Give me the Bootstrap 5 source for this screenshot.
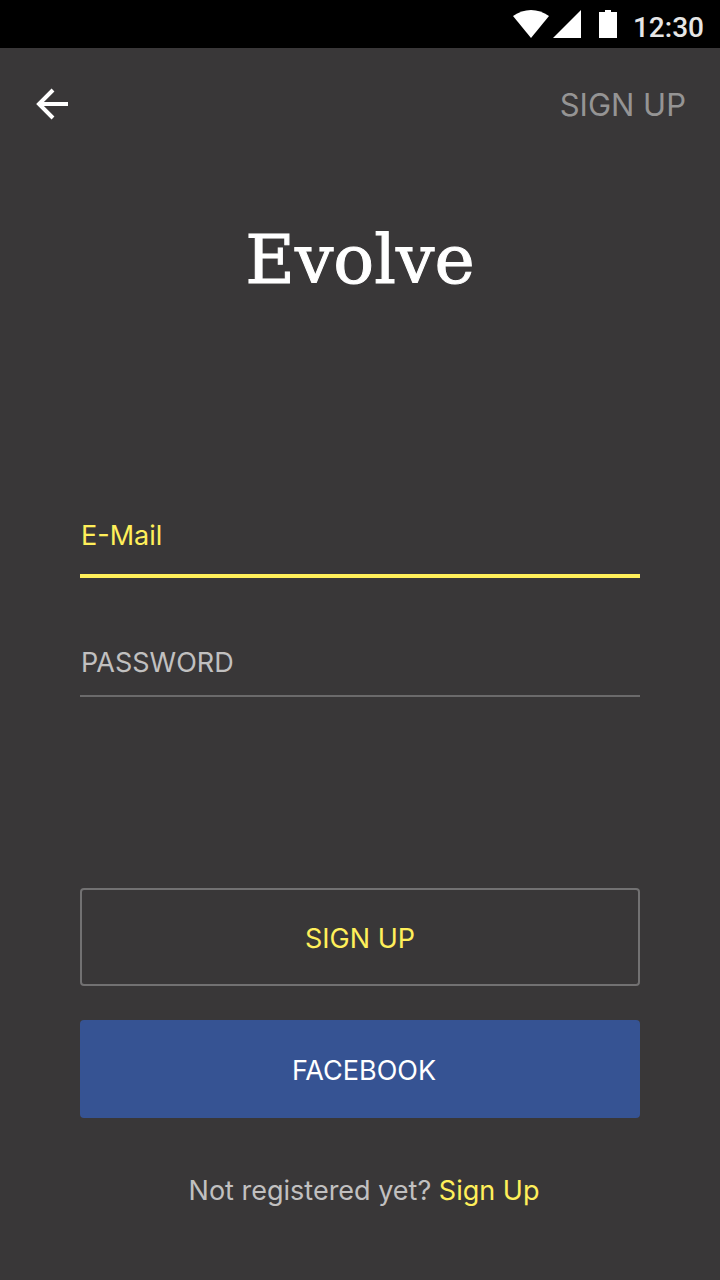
<!DOCTYPE html>
<html lang="en">
<head>
<meta charset="utf-8">
<meta name="viewport" content="width=device-width, initial-scale=1">
<title>Evolve</title>
<link href="https://cdn.jsdelivr.net/npm/bootstrap@5.3.0/dist/css/bootstrap.min.css" rel="stylesheet">
<style>
body{background:#393738;color:#c1c0c0;font-family:Inter,"Liberation Sans",sans-serif;font-size:27px;font-weight:400;line-height:40px}
.statusbar{background:#000;height:48px;color:#fff}
.clock{font-family:Roboto,sans-serif;font-size:28px;font-weight:500;color:#e6e6e6}
.signal-gap{margin-right:18px}
.topbar{height:112px;padding:0 34px}
.top-link{font-size:31px;color:#959494;padding-top:2px}
.brand{font-family:"DejaVu Serif",serif;font-size:68px;font-weight:400;line-height:80px;margin:60px 0 216px;color:#fff;-webkit-text-stroke:1px #fff}
.auth{padding:0 80px 66px}
/* The label shares the input's grid cell and gives way once text is typed */
.field-label,.field{grid-area:1/1}
.field-label{pointer-events:none;padding:0 1px}
.field{background:transparent;border:0;border-bottom:2px solid #6b6a6b;color:#fff;padding:0 1px 12px;height:54px;line-height:40px;width:100%;outline:0}
.field:not(:placeholder-shown) + .field-label{visibility:hidden}
.field-active{border-bottom:4px solid #ffef5a;padding-bottom:18px;height:62px}
.fields{gap:65px}
.accent,.accent:hover{color:#ffef5a}
.actions{margin-top:191px;gap:34px}
.action{height:98px;border-radius:4px;font-size:27px;line-height:40px;border:2px solid #727172;padding:4px 12px 0}
.action-fb,.action-fb:hover{background:#365393;border-color:#365393;color:#fff}
.footnote{margin:53px 0 0}
</style>
</head>
<body>
<div class="statusbar d-flex justify-content-end align-items-end px-3">
  <div class="d-flex align-self-center" aria-hidden="true">
    <svg class="me-1" width="36" height="28" viewBox="0 0 36 28" fill="currentColor"><path d="M0 6C11-2 25-2 36 6L18 28Z"/></svg>
    <svg class="signal-gap" width="28" height="28" viewBox="0 0 28 28" fill="currentColor"><path d="M28 0V28H0Z"/></svg>
    <svg class="me-3" width="18" height="28" viewBox="0 0 18 28" fill="currentColor"><path d="M6 0H12V2H18V28H0V2H6Z"/></svg>
  </div>
  <span class="clock">12:30</span>
</div>
<header class="topbar d-flex justify-content-between align-items-center">
  <a href="#" class="d-flex text-white" aria-label="Back">
    <svg width="36" height="36" viewBox="0 0 36 36" fill="none" stroke="currentColor" stroke-width="4"><path d="M34 18H5"/><path d="M19 4L5 18L19 32"/></svg>
  </a>
  <a href="#" class="top-link text-decoration-none">SIGN UP</a>
</header>
<main>
  <h1 class="brand text-center">Evolve</h1>
  <form class="auth">
    <div class="fields d-grid">
      <div class="d-grid">
        <input class="field field-active" id="email" type="email" placeholder=" ">
        <label class="field-label accent" for="email">E-Mail</label>
      </div>
      <div class="d-grid">
        <input class="field" id="password" type="password" placeholder=" ">
        <label class="field-label" for="password">PASSWORD</label>
      </div>
    </div>
    <div class="actions d-grid">
      <button type="submit" class="btn action accent">SIGN UP</button>
      <button type="button" class="btn action action-fb"><span class="ps-2">FACEBOOK</span></button>
    </div>
    <p class="footnote text-center ps-2">Not registered yet? <a class="accent text-decoration-none" href="#">Sign Up</a></p>
  </form>
</main>
<script src="https://cdn.jsdelivr.net/npm/bootstrap@5.3.0/dist/js/bootstrap.bundle.min.js"></script>
</body>
</html>
